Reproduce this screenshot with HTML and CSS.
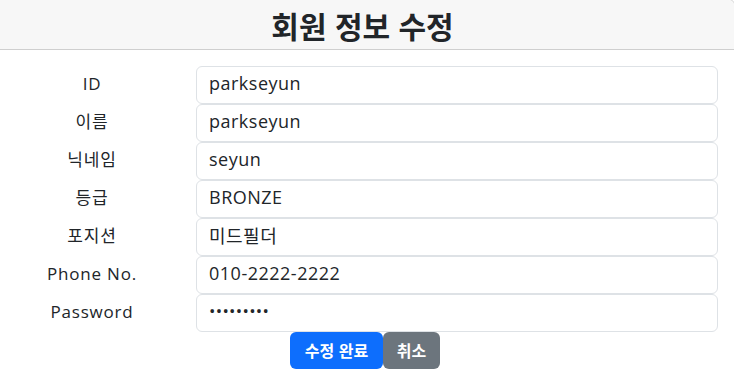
FILE: index.html
```html
<!DOCTYPE html>
<html lang="ko">
<head>
  <meta charset="UTF-8" />
  <meta name="viewport" content="width=device-width, initial-scale=1.0" />
  <title>회원 정보 수정</title>
  <link rel="stylesheet" href="styles.css">
</head>
<body>
  <div class="card">
    <div class="card-header">
      <h2>회원 정보 수정</h2>
    </div>

    <!-- 회원 정보 폼 -->
    <form class="card-body" id="editForm">
      <div class="row">
        <label for="userId">ID</label>
        <input type="text" id="userId" value="parkseyun" />
      </div>
      <div class="row">
        <label for="userName">이름</label>
        <input type="text" id="userName" value="parkseyun" />
      </div>
      <div class="row">
        <label for="nickname">닉네임</label>
        <input type="text" id="nickname" value="seyun" />
      </div>
      <div class="row">
        <label for="grade">등급</label>
        <input type="text" id="grade" value="BRONZE" />
      </div>
      <div class="row">
        <label for="position">포지션</label>
        <input type="text" id="position" value="미드필더" />
      </div>
      <div class="row">
        <label for="phone">Phone No.</label>
        <input type="text" id="phone" value="010-2222-2222" />
      </div>
      <div class="row">
        <label for="password">Password</label>
        <input type="password" id="password" value="123456789" />
      </div>

      <div class="actions">
        <button type="submit" class="btn btn-primary">수정 완료</button>
        <button type="button" class="btn btn-secondary">취소</button>
      </div>
    </form>
  </div>
</body>
</html>
```

FILE: styles.css
```css
body {
  margin: 0;
  background-color: #ffffff;
  font-family: "Open Sans", "Noto Sans CJK KR", sans-serif;
  color: #212529;
  overflow: hidden;
}

.card {
  width: 743px;
  margin: -1px 0 0 -10px;
  border: 1px solid #d3d3d3;
  border-radius: 6px;
  height: 420px;
}

.card-header {
  background-color: #f7f7f7;
  border-bottom: 1px solid #cfcfcf;
  border-radius: 6px 6px 0 0;
  padding: 7px 0 6px;
}

h2 {
  margin: 0;
  text-align: center;
  font-family: "Noto Sans CJK KR", sans-serif;
  font-size: 30px;
  font-weight: 700;
  line-height: 36px;
  color: #212529;
}

.card-body {
  padding: 16px 16px 0 9px;
}

.row {
  display: flex;
  align-items: center;
  gap: 12px;
}

label {
  width: 184px;
  flex: none;
  text-align: center;
  font-size: 17px;
  letter-spacing: 0.8px;
  line-height: 24px;
  padding-bottom: 2px;
}

input[type="text"],
input[type="password"] {
  flex: 1;
  box-sizing: border-box;
  height: 38px;
  padding: 0 12px 4px;
  border: 1px solid #dee2e6;
  border-radius: 6px;
  font-family: "Open Sans", "Noto Sans CJK KR", sans-serif;
  font-size: 18px;
  letter-spacing: 0.5px;
  color: #212529;
  background-color: #fff;
}

input[type="password"] {
  font-size: 17px;
  letter-spacing: 0.3px;
  padding-bottom: 6px;
}

.actions {
  display: flex;
  justify-content: center;
  padding-left: 12px;
}

.btn {
  border: 1px solid transparent;
  border-radius: 6px;
  color: #fff;
  font-family: "Noto Sans CJK KR", sans-serif;
  font-size: 16px;
  font-weight: 700;
  height: 37px;
  padding: 0 12px 2px;
  cursor: pointer;
}

.btn-primary {
  background-color: #0d6efd;
  width: 93px;
}

.btn-secondary {
  background-color: #6c757d;
  width: 57px;
}
```
